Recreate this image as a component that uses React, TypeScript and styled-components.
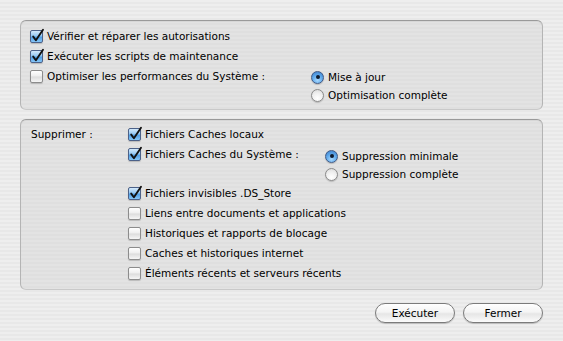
import React from "react";
import styled, { createGlobalStyle } from "styled-components";

const GlobalStyle = createGlobalStyle`
  html, body {
    margin: 0;
    padding: 0;
  }
  body {
    font-family: "DejaVu Sans", "Liberation Sans", sans-serif;
    font-size: 10.5px;
    color: #000;
  }
`;

// Aqua pinstripe window
const Window = styled.div`
  box-sizing: border-box;
  width: 563px;
  height: 341px;
  padding: 20px 20px 0;
  display: flex;
  flex-direction: column;
  background: repeating-linear-gradient(
    to bottom,
    #eeeeee 0px,
    #eeeeee 2px,
    #e8e8e8 2px,
    #e8e8e8 4px
  );
`;

const Panel = styled.div<{ $pt: number; $pb: number; $mt?: number }>`
  box-sizing: border-box;
  margin-top: ${(p) => p.$mt || 0}px;
  padding: ${(p) => p.$pt}px 9px ${(p) => p.$pb}px;
  border: 1px solid #b4b4b4;
  border-top-color: #9a9a9a;
  border-bottom-color: #c9c9c9;
  border-radius: 6px;
  background: repeating-linear-gradient(
    to bottom,
    #e3e3e3 0px,
    #e3e3e3 2px,
    #dfdfdf 2px,
    #dfdfdf 4px
  );
  box-shadow: inset 0 1px 1px rgba(0, 0, 0, 0.06);
`;

const List = styled.div`
  display: flex;
  flex-direction: column;
`;

const Row = styled.div`
  height: 20px;
  display: flex;
  align-items: center;
`;

const SplitRow = styled.div`
  display: flex;
  align-items: flex-start;
`;

const Lead = styled.div<{ $w: number }>`
  width: ${(p) => p.$w}px;
  flex: none;
`;

const Item = styled.label`
  display: flex;
  align-items: center;
  gap: 4px;
  white-space: nowrap;
`;

const Box = styled.span<{ $on?: boolean }>`
  box-sizing: border-box;
  position: relative;
  width: 13px;
  height: 13px;
  flex: none;
  border-radius: 2px;
  border: 1px solid ${(p) => (p.$on ? "#4c6188" : "#8c8c8c")};
  background: ${(p) =>
    p.$on
      ? "linear-gradient(#d4e9fb 0%, #93c7f2 45%, #4f9ee6 55%, #86c6f7 100%)"
      : "linear-gradient(#ffffff 0%, #eeeeee 48%, #dcdcdc 52%, #f6f6f6 100%)"};
  box-shadow: 0 1px 1px rgba(0, 0, 0, 0.18);

  svg {
    position: absolute;
    left: -1px;
    top: -3px;
    overflow: visible;
  }
`;

const RadioGroup = styled.div<{ $pt: number }>`
  display: flex;
  flex-direction: column;
  padding-top: ${(p) => p.$pt}px;
`;

const RadioRow = styled.div`
  height: 18px;
  display: flex;
  align-items: center;
`;

const Dot = styled.span<{ $on?: boolean }>`
  box-sizing: border-box;
  width: 13px;
  height: 13px;
  flex: none;
  border-radius: 50%;
  border: 1px solid ${(p) => (p.$on ? "#3f5a86" : "#8a8a8a")};
  display: flex;
  align-items: center;
  justify-content: center;
  background: ${(p) =>
    p.$on
      ? "radial-gradient(circle at 50% 75%, #a6d8ff 0%, #5aa4e8 55%, #3a79c4 100%)"
      : "radial-gradient(circle at 50% 75%, #ffffff 0%, #eeeeee 55%, #d4d4d4 100%)"};
  box-shadow: 0 1px 1px rgba(0, 0, 0, 0.18);

  &::after {
    content: "";
    width: 4px;
    height: 4px;
    border-radius: 50%;
    background: #0d1a2e;
    display: ${(p) => (p.$on ? "block" : "none")};
  }
`;

const Deletion = styled.div`
  display: grid;
  grid-template-columns: 98px 1fr;
`;

const Caption = styled.div`
  height: 20px;
  line-height: 20px;
  padding-left: 1px;
`;

const Buttons = styled.div`
  display: flex;
  justify-content: flex-end;
  gap: 8px;
  margin-top: 13px;
`;

const Button = styled.button`
  box-sizing: border-box;
  width: 80px;
  height: 20px;
  padding: 0;
  border: 1px solid #7b7b7b;
  border-radius: 10px;
  font: inherit;
  color: #000;
  background: linear-gradient(#ffffff 0%, #f4f4f4 45%, #e6e6e6 55%, #fbfbfb 100%);
  box-shadow: 0 1px 1px rgba(0, 0, 0, 0.2);
`;

function Check({ on, children }: { on?: boolean; children: React.ReactNode }) {
  return (
    <Item>
      <Box $on={on}>
        {on && (
          <svg width="15" height="15" viewBox="0 0 15 15">
            <path
              d="M3.2 8.6 L5.9 12.2 L13 1.8"
              fill="none"
              stroke="#111"
              strokeWidth="1.9"
              strokeLinecap="round"
              strokeLinejoin="round"
            />
          </svg>
        )}
      </Box>
      <span>{children}</span>
    </Item>
  );
}

function Radio({ on, children }: { on?: boolean; children: React.ReactNode }) {
  return (
    <RadioRow>
      <Item>
        <Dot $on={on} />
        <span>{children}</span>
      </Item>
    </RadioRow>
  );
}

export default function App() {
  return (
    <>
      <GlobalStyle />
      <Window>
        <Panel $pt={5} $pb={5}>
          <List>
            <Row>
              <Check on>Vérifier et réparer les autorisations</Check>
            </Row>
            <Row>
              <Check on>Exécuter les scripts de maintenance</Check>
            </Row>
            <SplitRow>
              <Lead $w={281}>
                <Row>
                  <Check>Optimiser les performances du Système :</Check>
                </Row>
              </Lead>
              <RadioGroup $pt={2}>
                <Radio on>Mise à jour</Radio>
                <Radio>Optimisation complète</Radio>
              </RadioGroup>
            </SplitRow>
          </List>
        </Panel>

        <Panel $pt={4} $pb={6} $mt={9}>
          <Deletion>
            <Caption>Supprimer :</Caption>
            <List>
              <Row>
                <Check on>Fichiers Caches locaux</Check>
              </Row>
              <SplitRow>
                <Lead $w={197}>
                  <Row>
                    <Check on>Fichiers Caches du Système :</Check>
                  </Row>
                </Lead>
                <RadioGroup $pt={3}>
                  <Radio on>Suppression minimale</Radio>
                  <Radio>Suppression complète</Radio>
                </RadioGroup>
              </SplitRow>
              <Row>
                <Check on>Fichiers invisibles .DS_Store</Check>
              </Row>
              <Row>
                <Check>Liens entre documents et applications</Check>
              </Row>
              <Row>
                <Check>Historiques et rapports de blocage</Check>
              </Row>
              <Row>
                <Check>Caches et historiques internet</Check>
              </Row>
              <Row>
                <Check>Éléments récents et serveurs récents</Check>
              </Row>
            </List>
          </Deletion>
        </Panel>

        <Buttons>
          <Button>Exécuter</Button>
          <Button>Fermer</Button>
        </Buttons>
      </Window>
    </>
  );
}
